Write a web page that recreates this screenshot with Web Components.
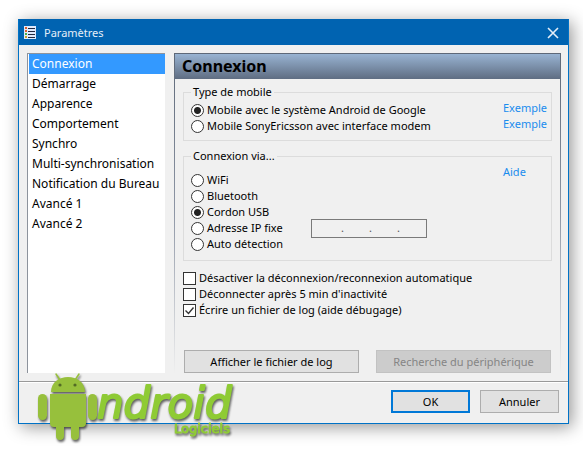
<!DOCTYPE html>
<html lang="fr">
<head>
<meta charset="utf-8">
<title>Paramètres</title>
<style>
  body { margin: 0; padding: 19px 14px 32px 18px; background: #fff; color: #000;
    font: 11px/16px "Noto Sans", "Open Sans", sans-serif; }
</style>
</head>
<body>
<dialog-window caption="Paramètres">
  <section-list>
    <section-item selected>Connexion</section-item>
    <section-item>Démarrage</section-item>
    <section-item>Apparence</section-item>
    <section-item>Comportement</section-item>
    <section-item>Synchro</section-item>
    <section-item>Multi-synchronisation</section-item>
    <section-item>Notification du Bureau</section-item>
    <section-item>Avancé 1</section-item>
    <section-item>Avancé 2</section-item>
  </section-list>
  <connection-panel></connection-panel>
  <push-button slot="actions" primary>OK</push-button>
  <push-button slot="actions">Annuler</push-button>
</dialog-window>
<brand-logo></brand-logo>

<script>
const define = (name, html, setup) => {
  const template = document.createElement('template');
  template.innerHTML = html;
  customElements.define(name, class extends HTMLElement {
    constructor() {
      super();
      this.attachShadow({ mode: 'open' }).append(template.content.cloneNode(true));
    }
    connectedCallback() { if (setup) setup(this, this.shadowRoot); }
  });
};

define('dialog-window', `
<style>
  :host { display: block; background: #f0f0f0; border: 1px solid #0072c6; border-top-color: #0063b1;
    box-shadow: 3px 3px 16px rgba(0,0,0,.42); }
  header { display: flex; align-items: center; gap: 8px; height: 25px; padding: 0 8px 0 5px; background: #0063b1; color: #e4eef8; }
  h1 { flex: 1; margin: 0; font: inherit; }
  header button { width: 14px; height: 14px; padding: 0; border: 0; background: none; }
  svg { display: block; }
  main { display: flex; gap: 9px; padding: 8px 7px 8px 8px; }
  footer { display: flex; justify-content: flex-end; gap: 10px; padding: 8px 9px 10px; border-top: 1px solid #999; box-shadow: inset 0 1px #fff; }
  ::slotted(push-button) { width: 79px; }
</style>
<header>
  <svg width="12" height="13" viewBox="0 0 12 13" aria-hidden="true">
    <rect width="12" height="13" fill="#dfe9fb"/>
    <path d="M1 2h2M1 5h2" stroke="#e0612c" stroke-width="2"/>
    <path d="M1 8h2" stroke="#4cb04a" stroke-width="2"/>
    <path d="M1 11h2" stroke="#c9a227" stroke-width="2"/>
    <path d="M4 2.5h7M4 5.5h7M4 8.5h7M4 11.5h7" stroke="#20283f"/>
  </svg>
  <h1></h1>
  <button aria-label="Fermer"><svg width="14" height="14" viewBox="0 0 14 14"><path d="M2 2l10 10M12 2L2 12" stroke="#e4eef8" stroke-width="1.6"/></svg></button>
</header>
<main><slot></slot></main>
<footer><slot name="actions"></slot></footer>
`, (el, root) => { root.querySelector('h1').textContent = el.getAttribute('caption'); });

define('section-list', `
<style>
  :host { display: block; flex: none; width: 138px; box-sizing: border-box; background: #fff;
    border-top: 1px solid #8d939c; border-left: 1px solid #8d939c; padding-left: 1px; }
  nav { display: flex; flex-direction: column; }
</style>
<nav aria-label="Sections"><slot></slot></nav>`);

define('section-item', `
<style>
  :host { display: block; }
  button { width: 100%; height: 20px; padding: 0 3px; border: 0; background: none; text-align: left;
    font: 12px/20px "Noto Sans", sans-serif; color: #000; white-space: nowrap; display: block; }
  :host([selected]) button { background: #3399ff; color: #fff; }
</style>
<button><slot></slot></button>`, (el, root) => {
  root.querySelector('button').onclick = () => {
    for (const item of el.parentElement.children) item.toggleAttribute('selected', item === el);
  };
});

define('push-button', `
<style>
  :host { display: block; }
  button { width: 100%; height: 23px; padding: 0; border: 1px solid #adadad; background: #e1e1e1;
    font: 11px/16px "Noto Sans", sans-serif; color: #000; display: block; }
  :host([primary]) button { border: 2px solid #0078d7; }
  button:disabled { background: #ccc; border-color: #c2c2c2; color: #858585; }
</style>
<button><slot></slot></button>`, (el, root) => {
  root.querySelector('button').disabled = el.hasAttribute('disabled');
});

define('group-box', `
<style>
  :host { display: block; }
  fieldset { margin: 0; min-width: 0; border: 1px solid #dcdcdc; padding: 0 5px 6px 7px; }
  :host([tall]) fieldset { padding-bottom: 8px; }
  legend { padding: 0 2px; height: 16px; }
</style>
<fieldset><legend></legend><slot></slot></fieldset>`, (el, root) => {
  root.querySelector('legend').textContent = el.getAttribute('caption');
});

const choice = type => `
<style>
  :host { display: block; height: 16px; white-space: nowrap; }
  label { display: flex; align-items: center; gap: 3px; }
  input { appearance: none; flex: none; box-sizing: border-box; width: 13px; height: 13px; margin: 0;
    border: 1px solid #333; background: #fff; display: grid; place-items: center; }
  input[type=radio] { border-radius: 50%; }
  input[type=radio]:checked { background: radial-gradient(circle, #222 0 3px, #fff 4px); }
  svg { display: none; position: absolute; pointer-events: none; }
  .box { display: grid; position: relative; }
  input[type=checkbox]:checked + svg { display: block; }
</style>
<label><span class="box"><input type="${type}"><svg width="13" height="13" viewBox="0 0 13 13"><path d="M2.5 6.5l3 3 5-6" fill="none" stroke="#333" stroke-width="1.4"/></svg></span><span><slot></slot></span></label>`;
define('check-option', choice('checkbox'), (el, root) => {
  root.querySelector('input').checked = el.hasAttribute('checked');
});
define('radio-option', choice('radio'), (el, root) => {
  const input = root.querySelector('input');
  input.checked = el.hasAttribute('checked');
  input.onchange = () => {
    for (const other of el.parentElement.querySelectorAll('radio-option'))
      if (other !== el) other.shadowRoot.querySelector('input').checked = false;
  };
});

define('ip-field', `
<style>
  :host { display: flex; align-items: center; box-sizing: border-box; width: 116px; height: 19px; padding: 0 1px 0 4px;
    border: 1px solid #7a7a7a; color: #555; }
  input { flex: 1; min-width: 0; width: 0; border: 0; padding: 0; background: none; text-align: center; font: inherit; }
</style>
<input aria-label="Octet 1"><span>.</span><input aria-label="Octet 2"><span>.</span><input aria-label="Octet 3"><span>.</span><input aria-label="Octet 4">`);

define('connection-panel', `
<style>
  :host { display: block; flex: 1; min-width: 0; border: 1px solid; border-bottom: 0;
    border-image: linear-gradient(#5d6878, #8f97a6 50%, #f0f0f0) 1; }
  h2 { margin: 0; height: 25px; padding-left: 7px; font: bold 16px/25px "Noto Sans", sans-serif; color: #000;
    background: linear-gradient(#98b3d2, #5f6d82); }
  .body { padding: 5px 8px 0; display: flex; flex-direction: column; gap: 7px; }
  .grid { display: grid; grid-template-columns: 120px 1fr 43px; grid-auto-rows: 16px; padding-top: 2px; }
  .grid.via { padding-top: 8px; }
  .wide { grid-column: 1 / 3; }
  radio-option { grid-column: 1; }
  ip-field { grid-column: 2; grid-row: 4; align-self: center; }
  a { grid-column: 3; color: #1a8cee; text-decoration: none; align-self: start; margin-top: -2px; }
  .via a { grid-row: 1; margin-top: -8px; }
  .checks { padding-top: 2px; }
  .buttons { display: flex; justify-content: space-between; gap: 17px; padding: 25px 1px 0; }
  push-button { flex: 1; }
</style>
<h2>Connexion</h2>
<div class="body">
  <group-box caption="Type de mobile"><div class="grid">
    <radio-option class="wide" checked>Mobile avec le système Android de Google</radio-option><a href="#google">Exemple</a>
    <radio-option class="wide">Mobile SonyEricsson avec interface modem</radio-option><a href="#sony">Exemple</a>
  </div></group-box>
  <group-box caption="Connexion via..." tall><div class="grid via">
    <radio-option>WiFi</radio-option>
    <radio-option>Bluetooth</radio-option>
    <radio-option checked>Cordon USB</radio-option>
    <radio-option>Adresse IP fixe</radio-option>
    <radio-option>Auto détection</radio-option>
    <ip-field></ip-field>
    <a href="#aide">Aide</a>
  </div></group-box>
  <div class="checks">
    <check-option>Désactiver la déconnexion/reconnexion automatique</check-option>
    <check-option>Déconnecter après 5 min d'inactivité</check-option>
    <check-option checked>Écrire un fichier de log (aide débugage)</check-option>
  </div>
  <div class="buttons">
    <push-button>Afficher le fichier de log</push-button>
    <push-button disabled>Recherche du périphérique</push-button>
  </div>
</div>`);

define('brand-logo', `
<style>
  :host { position: absolute; left: 36px; top: 372px; pointer-events: none; }
  svg { display: block; filter: drop-shadow(1px 2px 1px rgba(0,0,0,.6)); }
  text { font-family: "DejaVu Sans", sans-serif; fill: #8fcb35; stroke: #8fcb35; stroke-linejoin: round; }
  .name { font-style: italic; font-size: 42px; stroke-width: 2px; }
  .tag { font-size: 13px; stroke-width: 1px; }
</style>
<svg width="210" height="76" viewBox="36 372 210 76">
  <g fill="#97c03c">
    <path d="M51 392C51 372 85 372 85 392Z"/>
    <path d="M50 394H86V423Q86 427 82 427H79V436A4 4 0 0 1 71 436V427H64V436A4 4 0 0 1 56 436V427H54Q50 427 50 423Z"/>
    <rect x="38" y="394" width="9" height="26" rx="4.500"/>
    <rect x="88" y="394" width="9" height="26" rx="4.500"/>
  </g>
  <path d="M56 374l4 6M79 374l-4 6" stroke="#97c03c" stroke-width="1.500" stroke-linecap="round"/>
  <circle cx="60" cy="385" r="1.600" fill="#536b25"/><circle cx="75" cy="385" r="1.600" fill="#536b25"/>
  <text class="name" x="97" y="418">ndroid</text>
  <text class="tag" x="174" y="433">Logiciels</text>
</svg>`);
</script>
</body>
</html>
